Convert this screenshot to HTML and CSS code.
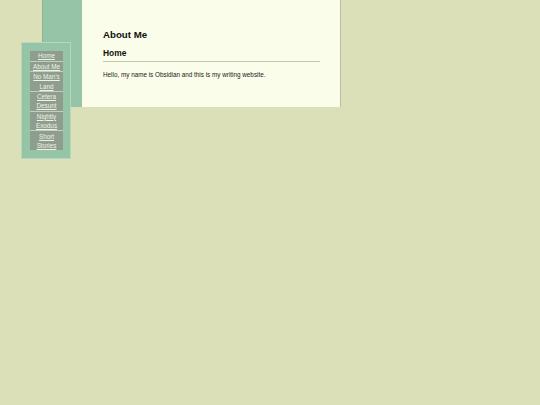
FILE: index.html
```html
<!DOCTYPE html>
<html>
<head>
<meta charset="utf-8">
<title>About Me</title>
<link rel="stylesheet" href="styles.css">
</head>
<body>
<div class="frame">
  <div class="content">
    <h1 class="title">About Me</h1>
    <h2 class="subtitle">Home</h2>
    <hr class="rule">
    <p class="text">Hello, my name is Obsidian and this is my writing website.</p>
  </div>
</div>
<nav class="nav">
  <a class="nav-item" href="#">Home</a>
  <a class="nav-item" href="#">About Me</a>
  <a class="nav-item" href="#">No Man's Land</a>
  <a class="nav-item" href="#">Cetera Desunt</a>
  <a class="nav-item" href="#">Nightly Exodus</a>
  <a class="nav-item" href="#">Short Stories</a>
</nav>
</body>
</html>
```
FILE: styles.css
```css
html, body {
  margin: 0;
  padding: 0;
  background: #dce0b9;
  font-family: "Liberation Sans", Arial, sans-serif;
}
.frame {
  margin-left: 42px;
  width: 259px;
  border-left: 1px dotted #8f9c88;
  background: #95c4a6;
  padding-left: 39px;
}
.content {
  background: #fafde9;
  border-right: 1px solid #b9bca6;
  padding: 29px 20px 29.5px 21px;
}
.title {
  margin: 0;
  font-size: 9.7px;
  line-height: 11px;
  font-weight: bold;
  color: #111;
}
.subtitle {
  margin: 8.5px 0 0 0;
  font-size: 8.44px;
  line-height: 9.4px;
  font-weight: bold;
  color: #111;
}
.rule {
  margin: 3px 0 0 0;
  border: 0;
  border-top: 1px solid #c6c9b0;
  height: 0;
}
.text {
  margin: 9px 0 0 0;
  font-size: 6.33px;
  line-height: 7px;
  color: #222;
}
.nav {
  position: absolute;
  left: 21px;
  top: 42px;
  width: 33px;
  padding: 8px 7px 8px 8px;
  background: #95c4a6;
  border: 1px solid #b4d7bf;
  display: flex;
  flex-direction: column;
}
.nav-item {
  display: block;
  background: #8e9d8d;
  color: #eef2e6;
  text-align: center;
  font-size: 6.33px;
  line-height: 9.1px;
  padding: 0.25px 0;
  text-decoration: underline;
}
.nav-item + .nav-item {
  border-top: 1px solid #bcd3bf;
}
```
